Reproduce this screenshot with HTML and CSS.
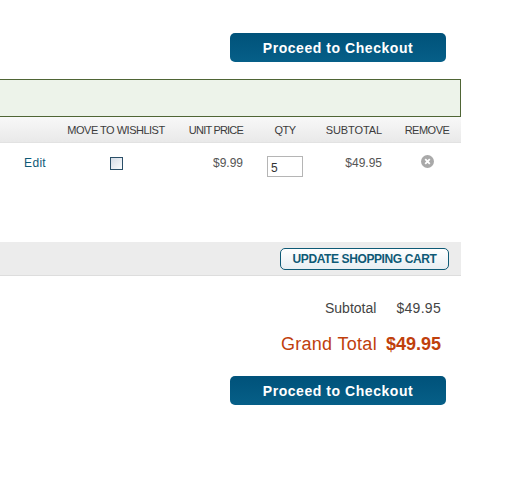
FILE: index.html
```html
<!DOCTYPE html>
<html lang="en">
<head>
<meta charset="utf-8">
<title>Shopping Cart</title>
<link rel="stylesheet" href="styles.css">
</head>
<body>
<main class="cart">
  <div class="actions top"><a class="checkout" href="#">Proceed to Checkout</a></div>
  <div class="message"></div>
  <div class="grid head">
    <span></span>
    <span class="center">MOVE TO WISHLIST</span>
    <span class="right tight">UNIT PRICE</span>
    <span class="center">QTY</span>
    <span class="right wide">SUBTOTAL</span>
    <span class="center last">REMOVE</span>
  </div>
  <div class="grid item">
    <a class="edit" href="#">Edit</a>
    <span class="center"><span class="check"></span></span>
    <span class="right">$9.99</span>
    <span class="center"><input class="qty" type="text" value="5"></span>
    <span class="right">$49.95</span>
    <span class="center last">
      <svg class="remove" width="13" height="13" viewBox="0 0 13 13"><circle cx="6.5" cy="6.5" r="6.5" fill="#a9a9a9"/><path d="M4.2 4.2l4.6 4.6M8.8 4.2l-4.6 4.6" stroke="#fff" stroke-width="1.8"/></svg>
    </span>
  </div>
  <div class="update-bar"><a class="update" href="#">UPDATE SHOPPING CART</a></div>
  <div class="totals">
    <div class="line sub"><span>Subtotal</span><span class="amount">$49.95</span></div>
    <div class="line grand"><span>Grand Total</span><strong>$49.95</strong></div>
  </div>
  <div class="actions"><a class="checkout" href="#">Proceed to Checkout</a></div>
</main>
</body>
</html>
```
FILE: styles.css
```css
html, body { margin: 0; background: #fff; }
body { font-family: "Liberation Sans", Arial, sans-serif; color: #444; }
a { text-decoration: none; }
.cart { width: 461px; padding-top: 33px; }
.actions { display: flex; justify-content: flex-end; padding-right: 15px; }
.actions.top { margin-bottom: 17px; }
.checkout {
  width: 216px; height: 29px; border-radius: 5px;
  background: linear-gradient(#00527a, #065f88);
  color: #fff; font-size: 14px; font-weight: bold; letter-spacing: 0.55px;
  line-height: 31px; text-align: center;
}
.message { height: 36px; background: #edf3ea; border: 1px solid #4f6535; border-left: 0; }
.grid { display: grid; grid-template-columns: 58px 116px 69px 84px 55px 79px; }
.last { padding-left: 11px; }
.head {
  height: 25px; border-bottom: 1px solid #e2e2e2; align-items: center;
  background: linear-gradient(#f8f8f8, #e9e9e9);
  font-size: 11px; letter-spacing: -0.5px; color: #3c3c3c;
}
.tight { letter-spacing: -0.8px; }
.wide { letter-spacing: -0.1px; margin-left: -4px; }
.center { text-align: center; }
.right { text-align: right; }
.item { height: 99px; font-size: 12px; color: #555; padding-top: 13px; box-sizing: border-box; }
.edit { font-size: 12px; letter-spacing: 0.3px; color: #0e5a76; text-align: right; padding-right: 12px; }
.check { display: inline-block; width: 11px; height: 11px; margin-top: 1px; border: 1px solid #2b4f68; background: linear-gradient(135deg, #d5dce6, #fbfcfd); }
.qty { box-sizing: border-box; width: 36px; height: 21px; margin: 0; padding: 2px 3px 0; border: 1px solid #b5b5b5; font: 12px "Liberation Sans", Arial, sans-serif; color: #333; }
.remove { display: block; margin: -1px auto 0; }
.update-bar { height: 33px; display: flex; align-items: center; justify-content: flex-end; padding-right: 12px; background: #ececec; border-bottom: 1px solid #ddd; }
.update {
  box-sizing: border-box; width: 169px; height: 22px; border: 1px solid #0e5a76; border-radius: 5px;
  background: linear-gradient(#fff, #e8eef2); color: #0e5a76;
  font-size: 12px; letter-spacing: -0.4px; font-weight: bold; line-height: 20px; text-align: center;
}
.totals { padding: 23px 20px 0 0; }
.line { display: flex; justify-content: flex-end; }
.sub { font-size: 14px; gap: 20px; line-height: 18px; color: #444; }
.amount { letter-spacing: 0.3px; }
.grand { font-size: 18px; letter-spacing: 0.3px; gap: 9px; margin-top: 17px; line-height: 20px; color: #c0400c; }
.grand strong { letter-spacing: 0; }
.totals + .actions { margin-top: 22px; }
```
